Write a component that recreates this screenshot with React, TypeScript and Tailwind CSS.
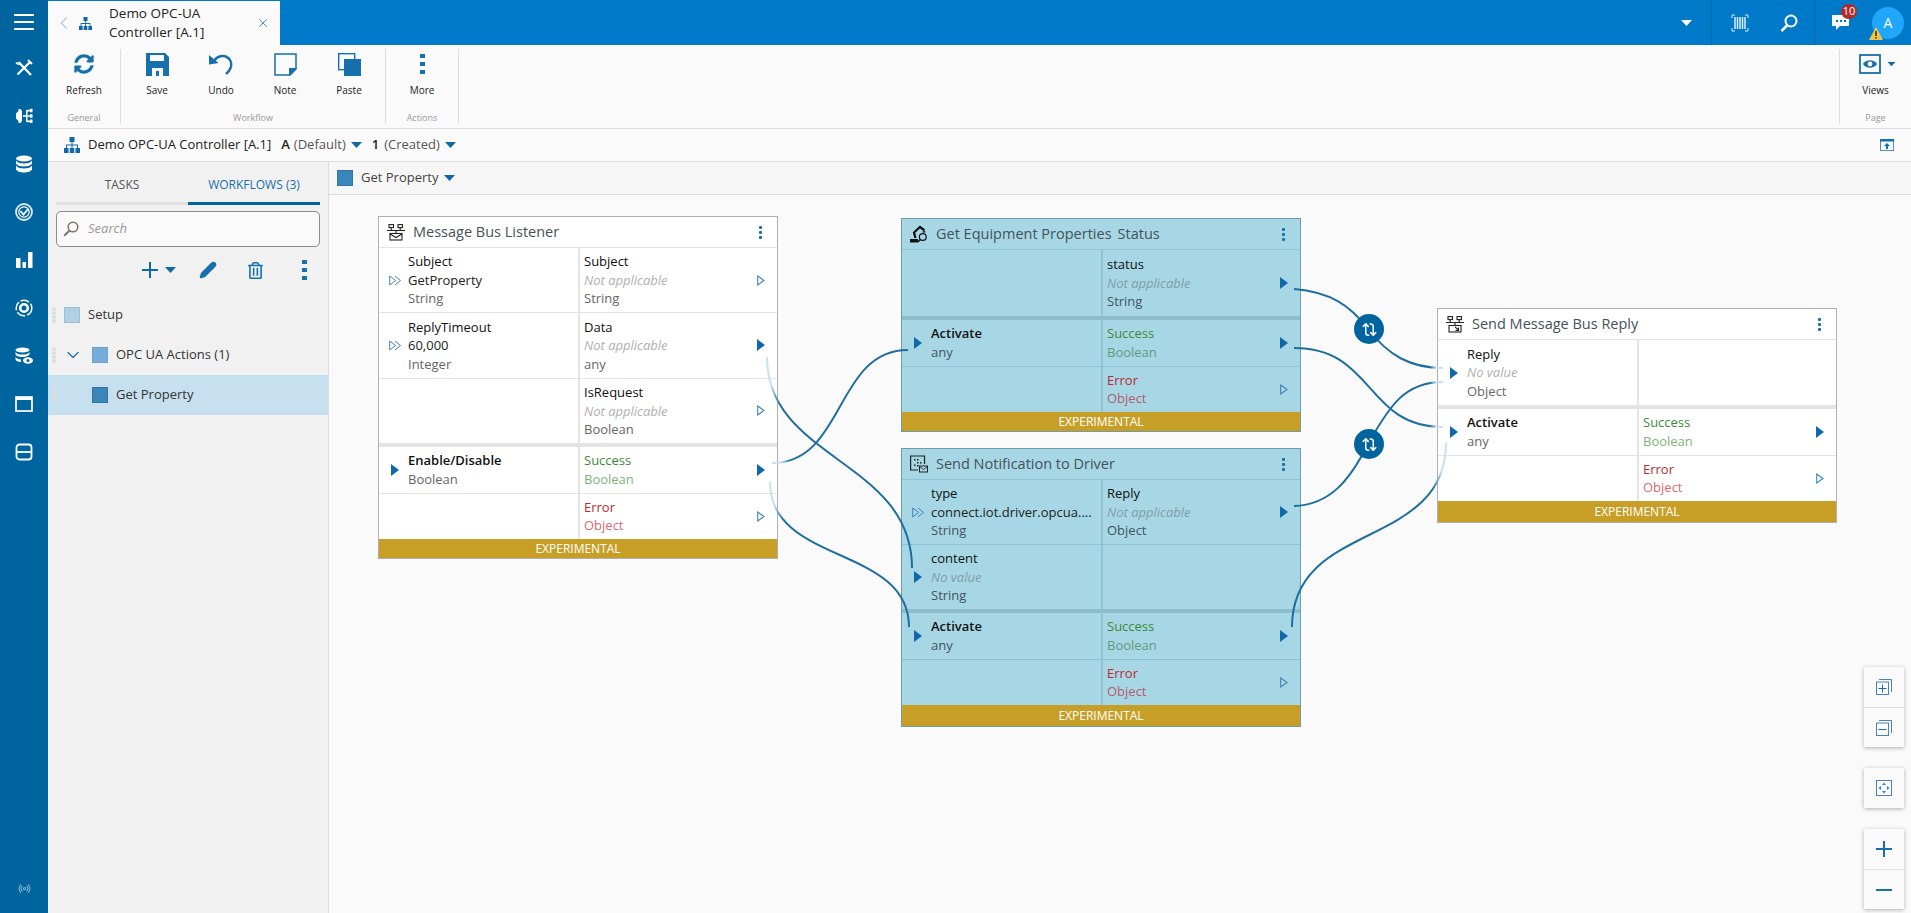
import type { ReactNode } from "react";
import { Radio, Repeat, X, ChevronLeft, ChevronDown, Pencil } from "lucide-react";
import { FaSyncAlt, FaRegTrashAlt } from "react-icons/fa";

type Port = "solid" | "hollow" | "double";
type Kind = "plain" | "success" | "error";

interface Cell {
  label?: string;
  value?: string;
  empty?: boolean; // italic placeholder value
  type?: string;
  port?: Port;
  kind?: Kind;
  strong?: boolean;
}

const BLUE = "#0f69a8";

function Caret({ className = "", color = BLUE }: { className?: string; color?: string }) {
  return (
    <svg width="11" height="6" viewBox="0 0 11 6" className={className}>
      <path d="M0 0h11L5.5 6z" fill={color} />
    </svg>
  );
}

function Hierarchy({ size = 16 }: { size?: number }) {
  return (
    <svg width={size} height={size} viewBox="0 0 16 16" fill={BLUE}>
      <rect x="5.5" y="0" width="5" height="5" />
      <rect x="0" y="11" width="4.5" height="5" />
      <rect x="5.75" y="11" width="4.5" height="5" />
      <rect x="11.5" y="11" width="4.5" height="5" />
      <path d="M7.5 5h1v2.5H14V11h-1V8.5H8.5V11h-1V8.5H3V11H2V7.500h5.500z" />
    </svg>
  );
}

function Kebab({ small = false }: { small?: boolean }) {
  const cell = small ? "h-[3px] w-[3px] rounded-[1px]" : "h-[4px] w-[5px]";
  return (
    <div className={small ? "flex flex-col gap-[2px]" : "flex flex-col gap-[4px]"}>
      <div className={`${cell} bg-[#1670ac]`} />
      <div className={`${cell} bg-[#1670ac]`} />
      <div className={`${cell} bg-[#1670ac]`} />
    </div>
  );
}

function PortMark({ port }: { port: Port }) {
  if (port === "solid") {
    return (
      <svg width="8" height="12" viewBox="0 0 8 12">
        <path d="M0 0l8 6-8 6z" fill={BLUE} />
      </svg>
    );
  }
  if (port === "hollow") {
    return (
      <svg width="8" height="11" viewBox="0 0 8 11">
        <path d="M.7 1l6.300 4.500L.7 10z" fill="none" stroke="#3f86ba" strokeWidth="1.100" />
      </svg>
    );
  }
  return (
    <svg width="12" height="11" viewBox="0 0 12 11" fill="none" stroke="#3f86ba" strokeWidth="1">
      <path d="M.7 1l6 4.500-6 4.500z" />
      <path d="M6 1l5.500 4.500L6 10" />
    </svg>
  );
}

function Row({ cell, side, teal }: { cell: Cell; side: "in" | "out"; teal: boolean }) {
  const line = teal ? "border-[#8ec3d3]" : "border-[#e4e4e4]";
  const labelColor =
    cell.kind === "success"
      ? "text-[#3b8a36]"
      : cell.kind === "error"
        ? "text-[#bb2b30]"
        : "text-[#111111]";
  const typeColor =
    cell.kind === "success"
      ? teal
        ? "text-[#5c9c7e]"
        : "text-[#7fb37a]"
      : cell.kind === "error"
        ? teal
          ? "text-[#b25c70]"
          : "text-[#dc6a70]"
        : teal
          ? "text-[#43545e]"
          : "text-[#666666]";
  return (
    <div
      className={`relative flex min-h-0 flex-1 items-center border-b last:border-b-0 ${line} ${
        side === "in" ? "pr-1 pl-[29px]" : "pr-[11px] pl-[4px]"
      }`}
    >
      {cell.port && side === "in" && (
        <div className="absolute top-0 bottom-0 left-[9px] flex w-[14px] items-center justify-center">
          <PortMark port={cell.port} />
        </div>
      )}
      <div className="min-w-0 flex-1 text-[13px] leading-[18.5px]">
        {cell.label && (
          <div className={`${labelColor} ${cell.strong ? "font-semibold" : ""}`}>{cell.label}</div>
        )}
        {cell.value && (
          <div
            className={
              cell.empty
                ? `italic ${teal ? "text-[#7e9dab]" : "text-[#b0b0b0]"}`
                : "whitespace-nowrap text-[#222222]"
            }
          >
            {cell.value}
          </div>
        )}
        {cell.type && <div className={typeColor}>{cell.type}</div>}
      </div>
      {cell.port && side === "out" && (
        <div className="flex w-[10px] items-center justify-center">
          <PortMark port={cell.port} />
        </div>
      )}
    </div>
  );
}

function Pair({
  left,
  right,
  teal,
  className,
}: {
  left: Cell[];
  right: Cell[];
  teal: boolean;
  className: string;
}) {
  const rule = teal ? "bg-[#8ec3d3]" : "bg-[#e4e4e4]";
  return (
    <div className={`flex ${className}`}>
      <div className="flex w-1/2 flex-col">
        {left.map((c, i) => (
          <Row key={i} cell={c} side="in" teal={teal} />
        ))}
      </div>
      <div className={`w-[2px] shrink-0 ${rule}`} />
      <div className="flex flex-1 flex-col">
        {right.map((c, i) => (
          <Row key={i} cell={c} side="out" teal={teal} />
        ))}
      </div>
    </div>
  );
}

function WorkflowNode({
  title,
  subtitle,
  icon,
  teal = false,
  className,
  topClass,
  inputs,
  outputs,
  actionsIn,
  actionsOut,
}: {
  title: string;
  subtitle?: string;
  icon: ReactNode;
  teal?: boolean;
  className: string;
  topClass: string;
  inputs: Cell[];
  outputs: Cell[];
  actionsIn: Cell[];
  actionsOut: Cell[];
}) {
  return (
    <div
      className={`absolute flex flex-col border ${className} ${
        teal ? "border-[#6f9cab] bg-[#a7d7e5]" : "border-[#b0b0b0] bg-white"
      }`}
    >
      <div
        className={`flex h-[31px] shrink-0 items-center border-b pr-[15px] pl-[8px] ${
          teal ? "border-[#8ec3d3]" : "border-[#e4e4e4]"
        }`}
      >
        <div className="flex w-[18px] justify-center">{icon}</div>
        <div className="ml-[8px] flex-1 text-[14.5px] text-[#44525a]">
          {title}
          {subtitle && <span className="ml-[6px]">{subtitle}</span>}
        </div>
        <Kebab small />
      </div>
      <Pair left={inputs} right={outputs} teal={teal} className={topClass} />
      <div className={`h-[4px] shrink-0 ${teal ? "bg-[#8dbccb]" : "bg-[#e4e4e4]"}`} />
      <Pair left={actionsIn} right={actionsOut} teal={teal} className="h-[92px] shrink-0" />
      <div className="flex flex-1 items-center justify-center bg-[#c79f27] text-[12px] text-white">
        EXPERIMENTAL
      </div>
    </div>
  );
}

function BusIcon({ reply = false }: { reply?: boolean }) {
  return (
    <svg width="18" height="17" viewBox="0 0 18 17" fill="none" stroke="#222" strokeWidth="1.100">
      <rect x="2" y=".6" width="4.500" height="3" />
      <rect x="11" y=".6" width="4.500" height="3" />
      <path d="M4.200 3.600v2.400M13.200 3.600v2.400M0 6.500h18M9 6.500v2.500" />
      <rect x="3" y="9.500" width="12" height="6.500" />
      {reply ? <path d="M9 11l3.500 3M12.500 11.500v3h-3" /> : <path d="M3 10l6 3.500 6-3.500" />}
    </svg>
  );
}

function RobotIcon() {
  return (
    <svg width="18" height="18" viewBox="0 0 18 18">
      <path d="M5.500 13L4 7.500 10 2l4 3" fill="none" stroke="#111" strokeWidth="2.200" />
      <path d="M14 4v3M12.500 7h3" stroke="#111" strokeWidth="1.200" />
      <path d="M0 14h8v3.500H0z" fill="#111" />
      <circle cx="12.800" cy="12" r="3.400" fill="none" stroke="#111" strokeWidth="1.200" />
      <path d="M10.300 14.500L8 17" stroke="#111" strokeWidth="1.500" />
    </svg>
  );
}

function DriverIcon() {
  return (
    <svg width="18" height="18" viewBox="0 0 18 18">
      <path d="M14.500 9V1H.6v14H8" fill="none" stroke="#222" strokeWidth="1.200" />
      <path d="M4 4h1.500v1.500H4zM7 4h1.500v1.500H7zM7 7h1.500v1.500H7zM10 7h1.500v1.500H10zM4 9.500h1.500V11H4zM7 10h1.500v1.500H7z" fill="#222" />
      <rect x="9.500" y="11" width="8" height="6" fill="#a7d7e5" stroke="#222" strokeWidth="1" />
      <path d="M9.500 11.500l4 3 4-3" fill="none" stroke="#222" strokeWidth=".9" />
    </svg>
  );
}

function RailGlyph({ name }: { name: string }) {
  const common = { width: 18, height: 18, viewBox: "0 0 18 18" };
  switch (name) {
    case "tools":
      return (
        <svg {...common} fill="none" stroke="#fff" strokeWidth="2.200">
          <path d="M3.500 3L16 16" />
          <path d="M15 3L2.500 15.500" />
          <path d="M1 3.500a3.500 3.500 0 0 0 5 1" strokeWidth="1.500" />
          <path d="M13 1l4 4" strokeWidth="2" />
        </svg>
      );
    case "flow":
      return (
        <svg {...common} fill="#fff">
          <path d="M1 6.500l2.500-2.500v-2h2l1.500 2v10l-1.500 2h-2v-2L1 11.500z" />
          <path d="M8 8.200h4v1.600H8z" />
          <path d="M11 3h1.500v12H11z" />
          <path d="M12 2.800h3v1.600h-3zM12 8.200h3v1.600h-3zM12 13.600h3v1.600h-3z" />
          <path d="M15 1.800h2.500v3.500H15zM15 7.200h2.500v3.500H15zM15 12.600h2.500v3.500H15z" />
        </svg>
      );
    case "db":
      return (
        <svg {...common} fill="#fff">
          <ellipse cx="9" cy="3.500" rx="8" ry="3" />
          <path d="M1 5.500c1 2 4 3 8 3s7-1 8-3v3c-1 2-4 3-8 3s-7-1-8-3z" />
          <path d="M1 10.500c1 2 4 3 8 3s7-1 8-3v4c-1 2-4 3-8 3s-7-1-8-3z" />
        </svg>
      );
    case "check":
      return (
        <svg {...common} fill="none" stroke="#fff">
          <circle cx="9" cy="9" r="8" strokeWidth="1.800" opacity=".85" />
          <circle cx="9" cy="9" r="5.200" strokeWidth="1.200" />
          <path d="M5.500 8l3 3.500L13 6" strokeWidth="1.800" />
        </svg>
      );
    case "bars":
      return (
        <svg {...common} fill="#fff">
          <path d="M1 7h4.500v10H1zM7.500 11H11v6H7.500zM13 1h4.500v16H13z" />
        </svg>
      );
    case "target":
      return (
        <svg {...common} fill="none" stroke="#fff">
          <circle cx="9" cy="9" r="7.800" strokeWidth="1.500" strokeDasharray="9 2" />
          <circle cx="9" cy="9" r="3.800" strokeWidth="2.600" />
        </svg>
      );
    case "dbview":
      return (
        <svg {...common} fill="#fff">
          <ellipse cx="7.500" cy="3" rx="7" ry="2.600" />
          <path d="M.5 5c1 1.800 3.500 2.600 7 2.600s6-.8 7-2.600v2.500c-2 2-5 2.600-7 2.600s-6-.6-7-2.600z" />
          <path d="M.5 10c1 1.600 3 2.400 5.500 2.500v2.500c-3 0-5-1-5.500-2.400z" />
          <ellipse cx="13" cy="13.500" rx="5" ry="3.200" />
          <circle cx="13" cy="13.500" r="1.500" fill="#00649f" />
        </svg>
      );
    case "window":
      return (
        <svg {...common}>
          <rect x="1" y="2" width="16" height="14" fill="none" stroke="#fff" strokeWidth="1.700" />
          <rect x="1" y="2" width="16" height="3" fill="#fff" />
        </svg>
      );
    default:
      return (
        <svg {...common} fill="none" stroke="#fff" strokeWidth="1.800">
          <rect x="1.500" y="1.500" width="15" height="15" rx="3" />
          <path d="M1.500 9h15" />
        </svg>
      );
  }
}

function Rail() {
  const names = ["tools", "flow", "db", "check", "bars", "target", "dbview", "window", "split"];
  return (
    <div className="flex w-[48px] shrink-0 flex-col items-center bg-[#00649f]">
      <div className="flex h-[44px] w-full flex-col items-center justify-center gap-[5px]">
        <div className="h-[2px] w-[20px] bg-white" />
        <div className="h-[2px] w-[20px] bg-white" />
        <div className="h-[2px] w-[20px] bg-white" />
      </div>
      {names.map((n) => (
        <div key={n} className="flex h-[48px] w-full items-center justify-center">
          <RailGlyph name={n} />
        </div>
      ))}
      <div className="mt-auto flex h-[50px] items-center justify-center opacity-50">
        <Radio size={13} color="#fff" />
      </div>
    </div>
  );
}

function TopBar() {
  return (
    <div className="flex h-[45px] shrink-0 bg-[#0079c8]">
      <div className="mt-[1px] flex w-[232px] items-center bg-[#fafafa]">
        <ChevronLeft size={22} strokeWidth={1.200} color="#a9cde4" className="ml-[5px]" />
        <div className="ml-[4px]">
          <Hierarchy size={13} />
        </div>
        <div className="ml-[17px] flex-1 text-[13.5px] leading-[19px] text-[#222222]">
          Demo OPC-UA
          <br />
          Controller [A.1]
        </div>
        <X size={14} strokeWidth={1.300} color="#1670ac" className="mr-[10px]" />
      </div>
      <div className="flex flex-1 items-center justify-end">
        <div className="flex h-full w-[56px] items-center justify-center border-r border-[#0067ab] pl-[6px]">
          <Caret color="#fff" />
        </div>
        <div className="flex h-full w-[103px] items-center justify-around border-r border-[#0067ab] pr-[1px] pl-[3px]">
          <svg width="18" height="18" viewBox="0 0 18 18" fill="none" stroke="#d9f0fb" strokeWidth="1">
            <path d="M4 1H1v3M14 1h3v3M4 17H1v-3M14 17h3v-3" />
            <path d="M4 3v12M6.500 3v12M9 3v12M11.500 3v12M14 3v12" strokeWidth="1.500" />
          </svg>
          <svg width="18" height="18" viewBox="0 0 18 18" fill="none" stroke="#fff" strokeWidth="2">
            <circle cx="11" cy="7" r="5.500" />
            <path d="M7 11.500L1.500 17" strokeWidth="2.500" />
          </svg>
        </div>
        <div className="flex h-full w-[96px] items-center pl-[17px]">
          <div className="relative">
            <svg width="17" height="16" viewBox="0 0 17 16" className="block">
              <path d="M0 0h17v11H8l-4 4v-4H0z" fill="#fff" />
              <path d="M4 5h2v2H4zM8 5h2v2H8zM12 5h2v2h-2z" fill="#0079c8" />
            </svg>
            <div className="absolute top-[-11px] left-[9px] flex h-[15px] min-w-[16px] items-center justify-center rounded-full bg-[#b02a2a] px-[1px] text-[11px] text-white">
              10
            </div>
          </div>
          <div className="relative ml-[23px] flex h-[32px] w-[32px] items-center justify-center rounded-full bg-[#1ea7fd] text-[14px] text-white">
            A
            <svg width="14" height="13" viewBox="0 0 14 13" className="absolute top-[20px] left-[-3px]">
              <path d="M7 0l7 13H0z" fill="#f4c640" />
              <path d="M6.300 4h1.400v5H6.300zM6.300 10h1.400v1.500H6.300z" fill="#222" />
            </svg>
          </div>
        </div>
      </div>
    </div>
  );
}

function RibbonButton({ label, icon, className }: { label: string; icon: ReactNode; className: string }) {
  return (
    <div className={`flex flex-col items-center ${className}`}>
      <div className="flex h-[24px] items-center justify-center">{icon}</div>
      <div className="mt-[7px] text-[10px] leading-[15px] text-[#222222]">{label}</div>
    </div>
  );
}

function RibbonGroup({ label, children, className }: { label: string; children: ReactNode; className: string }) {
  return (
    <div className={`flex h-[75px] flex-col items-center border-r border-[#dddddd] ${className}`}>
      <div className="flex flex-1 pt-[3px]">{children}</div>
      <div className="text-[9px] leading-[12px] text-[#999999]">{label}</div>
    </div>
  );
}

function Ribbon() {
  return (
    <div className="flex h-[84px] shrink-0 items-start justify-between border-b border-[#dddddd] bg-[#fafafa] pt-[4px]">
      <div className="flex">
        <RibbonGroup label="General" className="w-[73px]">
          <RibbonButton
            label="Refresh"
            className="w-[72px]"
            icon={<FaSyncAlt size={20} color="#1670ac" />}
          />
        </RibbonGroup>
        <RibbonGroup label="Workflow" className="w-[265px]">
          <RibbonButton
            label="Save"
            className="w-[64px]"
            icon={
              <svg width="23" height="23" viewBox="0 0 23 23">
                <path d="M0 0h19l4 4v19H0z" fill="#1670ac" />
                <path d="M4 2h14v6H4z" fill="#fafafa" />
                <path d="M6 15h11v8H6z" fill="#fafafa" />
                <path d="M10 18h3v5h-3z" fill="#1670ac" />
              </svg>
            }
          />
          <RibbonButton
            label="Undo"
            className="w-[64px]"
            icon={
              <svg width="24" height="22" viewBox="0 0 24 22">
                <path d="M5 8C9 2 17 1 21 7C24 12 21 18 17 21" fill="none" stroke="#1670ac" strokeWidth="2.400" />
                <path d="M0 2L9.500 10 0 11.500z" fill="#1670ac" />
              </svg>
            }
          />
          <RibbonButton
            label="Note"
            className="w-[64px]"
            icon={
              <svg width="23" height="23" viewBox="0 0 23 23">
                <path d="M1 1h21v15l-6 6H1z" fill="none" stroke="#1670ac" strokeWidth="1.500" />
                <path d="M15 15h8l-8 8z" fill="#1670ac" />
              </svg>
            }
          />
          <RibbonButton
            label="Paste"
            className="w-[64px]"
            icon={
              <svg width="23" height="23" viewBox="0 0 23 23">
                <rect x=".7" y=".7" width="16" height="16" fill="none" stroke="#1670ac" strokeWidth="1.400" />
                <rect x="6" y="6" width="17" height="17" fill="#1670ac" />
              </svg>
            }
          />
        </RibbonGroup>
        <RibbonGroup label="Actions" className="w-[73px]">
          <RibbonButton label="More" className="w-[72px]" icon={<Kebab />} />
        </RibbonGroup>
      </div>
      <div className="flex">
        <RibbonGroup label="Page" className="w-[72px] border-r-0 border-l">
          <RibbonButton
            label="Views"
            className="w-[72px]"
            icon={
              <div className="flex items-center">
                <svg width="22" height="20" viewBox="0 0 22 20" className="ml-[5px]">
                  <rect x="1" y="1" width="20" height="18" fill="none" stroke="#1670ac" strokeWidth="1.800" />
                  <path d="M4 10c3-5 11-5 14 0-3 5-11 5-14 0z" fill="#1670ac" />
                  <circle cx="11" cy="10" r="2.400" fill="#fafafa" />
                </svg>
                <Caret className="ml-[5px] scale-75" />
              </div>
            }
          />
        </RibbonGroup>
      </div>
    </div>
  );
}

function Breadcrumb() {
  return (
    <div className="flex h-[33px] shrink-0 items-center border-b border-[#dddddd] bg-[#fafafa] pr-[17px] pb-[1px] pl-[16px] text-[13px]">
      <Hierarchy />
      <span className="ml-[8px] text-[#222222]">Demo OPC-UA Controller [A.1]</span>
      <span className="ml-[10px] font-semibold text-[#222222]">A</span>
      <span className="ml-[4px] text-[#555555]">(Default)</span>
      <Caret className="ml-[5px]" />
      <span className="ml-[10px] font-semibold text-[#222222]">1</span>
      <span className="ml-[5px] text-[#555555]">(Created)</span>
      <Caret className="ml-[5px]" />
      <svg width="14" height="12" viewBox="0 0 14 12" className="ml-auto">
        <rect x=".5" y=".5" width="13" height="11" fill="#f4fafd" stroke="#4b92c2" />
        <rect x="0" y="0" width="14" height="2.500" fill="#1670ac" />
        <path d="M7 4l-3 3h2v3h2V7h2z" fill="#1670ac" />
      </svg>
    </div>
  );
}

function Grip() {
  return (
    <div className="absolute top-1/2 left-[4px] flex w-[4px] -translate-y-1/2 flex-col gap-[1px]">
      {[0, 1, 2, 3].map((i) => (
        <div key={i} className="h-[3px] bg-[#dddddd]" />
      ))}
    </div>
  );
}

function Sidebar() {
  return (
    <div className="flex w-[281px] shrink-0 flex-col border-r border-[#dddddd] bg-[#f1f1f1]">
      <div className="flex h-[43px] px-[8px] text-[12px]">
        <div className="flex w-1/2 items-center justify-center border-b-[3px] border-[#e0e0e0] pt-[5px] text-[#555555]">
          TASKS
        </div>
        <div className="flex w-1/2 items-center justify-center border-b-[3px] border-[#00649f] pt-[5px] text-[#1670ac]">
          WORKFLOWS (3)
        </div>
      </div>
      <div className="mx-[8px] mt-[6px] flex h-[36px] items-center rounded-[5px] border border-[#8c8c8c] bg-[#fafafa] pl-[6px]">
        <svg width="16" height="16" viewBox="0 0 16 16" fill="none" stroke="#7d7468" strokeWidth="1.500">
          <circle cx="10" cy="6" r="4.800" />
          <path d="M6.500 9.500L1.200 14.800" strokeWidth="2" />
        </svg>
        <span className="ml-[9px] text-[13px] text-[#999999] italic">Search</span>
      </div>
      <div className="flex h-[48px] shrink-0 items-center pb-[2px] pl-[94px]">
        <svg width="16" height="16" viewBox="0 0 16 16">
          <path d="M7 0h2v7h7v2H9v7H7V9H0V7h7z" fill={BLUE} />
        </svg>
        <Caret className="ml-[7px]" />
        <Pencil size={18} color="#1670ac" fill="#1670ac" className="ml-[23px]" />
        <FaRegTrashAlt size={17} color="#1670ac" className="ml-[30px]" />
        <div className="ml-[38px]">
          <Kebab />
        </div>
      </div>
      <div className="flex flex-col">
        <div className="relative flex h-[40px] items-center pl-[16px]">
          <Grip />
          <div className="h-[16px] w-[16px] border border-[#9bbfd6] bg-[#b1d0e3]" />
          <span className="ml-[8px] text-[13px] text-[#333333]">Setup</span>
        </div>
        <div className="relative flex h-[40px] items-center pl-[16px]">
          <Grip />
          <ChevronDown size={20} strokeWidth={1.400} color="#1670ac" className="mr-[6px] ml-[-1px]" />
          <div className="ml-[3px] h-[16px] w-[16px] border border-[#6ea5cf] bg-[#74addb]" />
          <span className="ml-[8px] text-[13px] text-[#333333]">OPC UA Actions (1)</span>
        </div>
        <div className="relative flex h-[40px] items-center bg-[#c7e0ef] pl-[44px]">
          <Grip />
          <div className="h-[16px] w-[16px] border border-[#2f75a6] bg-[#3a86ba]" />
          <span className="ml-[8px] text-[13px] text-[#333333]">Get Property</span>
        </div>
      </div>
    </div>
  );
}

function Connections() {
  return (
    <svg
      className="pointer-events-none absolute top-0 left-0 h-[718px] w-[1582px]"
      viewBox="329 195 1582 718"
      fill="none"
      strokeWidth="2"
    >
      <defs>
        <linearGradient id="fadeA" gradientUnits="userSpaceOnUse" x1="0" y1="357" x2="0" y2="405">
          <stop offset="0" stopColor="#c9e0ee" />
          <stop offset="0.6" stopColor="#c9e0ee" />
          <stop offset="1" stopColor="#1e6f9f" />
        </linearGradient>
        <linearGradient id="fadeB" gradientUnits="userSpaceOnUse" x1="0" y1="482" x2="0" y2="520">
          <stop offset="0" stopColor="#c9e0ee" />
          <stop offset="0.6" stopColor="#c9e0ee" />
          <stop offset="1" stopColor="#1e6f9f" />
        </linearGradient>
        <linearGradient id="fadeC" gradientUnits="userSpaceOnUse" x1="772" y1="0" x2="790" y2="0">
          <stop offset="0" stopColor="#c9e0ee" />
          <stop offset="0.5" stopColor="#c9e0ee" />
          <stop offset="1" stopColor="#1e6f9f" />
        </linearGradient>
        <linearGradient id="fadeD" gradientUnits="userSpaceOnUse" x1="1430" y1="0" x2="1443" y2="0">
          <stop offset="0" stopColor="#1e6f9f" />
          <stop offset="0.5" stopColor="#c9e0ee" />
          <stop offset="1" stopColor="#c9e0ee" />
        </linearGradient>
        <linearGradient id="fadeE" gradientUnits="userSpaceOnUse" x1="0" y1="490" x2="0" y2="443">
          <stop offset="0" stopColor="#1e6f9f" />
          <stop offset="0.4" stopColor="#c9e0ee" />
          <stop offset="1" stopColor="#c9e0ee" />
        </linearGradient>
      </defs>
      <path d="M767 357C767 460 912 460 912 568" stroke="url(#fadeA)" />
      <path d="M772 463C845 463 835 350 908 350" stroke="url(#fadeC)" />
      <path d="M770 482C770 565 909 545 909 627" stroke="url(#fadeB)" />
      <path d="M1294 289C1330 292 1350 305 1368 329C1388 355 1410 368 1443 368" stroke="url(#fadeD)" />
      <path d="M1294 348C1375 348 1365 427 1443 427" stroke="url(#fadeD)" />
      <path d="M1294 506C1330 505 1350 480 1368 444C1390 405 1405 382 1443 382" stroke="url(#fadeD)" />
      <path d="M1292 627C1292 520 1446 550 1446 443" stroke="url(#fadeE)" />
    </svg>
  );
}

function Converter({ className }: { className: string }) {
  return (
    <div className={`absolute flex h-[30px] w-[30px] items-center justify-center rounded-full bg-[#00649f] ${className}`}>
      <Repeat size={15} strokeWidth={2.400} color="#fff" className="rotate-90" />
    </div>
  );
}

function ViewButton({ children, bordered = false }: { children: ReactNode; bordered?: boolean }) {
  return (
    <div
      className={`flex h-[40px] w-[40px] items-center justify-center bg-[#fafafa] ${
        bordered ? "border-t border-[#e3e3e3]" : ""
      }`}
    >
      {children}
    </div>
  );
}

function ViewControls() {
  const stackBox = "rounded-[1px] bg-[#fafafa] shadow-[0_1px_4px_rgba(0,0,0,0.3)]";
  return (
    <div className="absolute right-[7px] bottom-[4px] flex flex-col gap-[21px]">
      <div className={stackBox}>
        <ViewButton>
          <svg width="16" height="16" viewBox="0 0 16 16" fill="none" stroke="#4b7fc0">
            <path d="M3 .5h12.500V13" />
            <rect x=".5" y="3" width="12" height="12.500" />
            <path d="M6.500 5.500v8M2.500 9.500h8" stroke="#1670ac" />
          </svg>
        </ViewButton>
        <ViewButton bordered>
          <svg width="16" height="16" viewBox="0 0 16 16" fill="none" stroke="#4b7fc0">
            <path d="M3 .5h12.500V13" />
            <rect x=".5" y="3" width="12" height="12.500" />
            <path d="M2.500 9.500h8" stroke="#1670ac" />
          </svg>
        </ViewButton>
      </div>
      <div className={stackBox}>
        <ViewButton>
          <svg width="16" height="16" viewBox="0 0 16 16">
            <rect x=".5" y=".5" width="15" height="15" fill="none" stroke="#4b7fc0" />
            <path d="M8 2.500l2 2.500H6zM8 13.500l2-2.500H6zM2.500 8L5 6v4zM13.500 8L11 6v4z" fill="#2f86c6" />
          </svg>
        </ViewButton>
      </div>
      <div className={stackBox}>
        <ViewButton>
          <svg width="16" height="16" viewBox="0 0 16 16">
            <path d="M7 0h2v7h7v2H9v7H7V9H0V7h7z" fill="#1670ac" />
          </svg>
        </ViewButton>
        <ViewButton bordered>
          <div className="h-[2px] w-[16px] bg-[#1670ac]" />
        </ViewButton>
      </div>
    </div>
  );
}

function Canvas() {
  return (
    <div className="flex min-w-0 flex-1 flex-col bg-[#fafafa]">
      <div className="flex h-[33px] shrink-0 items-center border-b border-[#dddddd] bg-[#f6f6f6] pb-[1px] pl-[8px]">
        <div className="h-[16px] w-[16px] border border-[#2f75a6] bg-[#3a86ba]" />
        <span className="ml-[8px] text-[13px] text-[#444444]">Get Property</span>
        <Caret className="ml-[6px]" />
      </div>
      <div className="relative flex-1 overflow-hidden">
        <WorkflowNode
          title="Message Bus Listener"
          icon={<BusIcon />}
          className="top-[21px] left-[49px] h-[343px] w-[400px]"
          topClass="h-[195px] shrink-0"
          inputs={[
            { label: "Subject", value: "GetProperty", type: "String", port: "double" },
            { label: "ReplyTimeout", value: "60,000", type: "Integer", port: "double" },
            {},
          ]}
          outputs={[
            { label: "Subject", value: "Not applicable", empty: true, type: "String", port: "hollow" },
            { label: "Data", value: "Not applicable", empty: true, type: "any", port: "solid" },
            { label: "IsRequest", value: "Not applicable", empty: true, type: "Boolean", port: "hollow" },
          ]}
          actionsIn={[{ label: "Enable/Disable", type: "Boolean", port: "solid", strong: true }, {}]}
          actionsOut={[
            { label: "Success", type: "Boolean", port: "solid", kind: "success" },
            { label: "Error", type: "Object", port: "hollow", kind: "error" },
          ]}
        />
        <WorkflowNode
          teal
          title="Get Equipment Properties"
          subtitle="Status"
          icon={<RobotIcon />}
          className="top-[23px] left-[572px] h-[214px] w-[400px]"
          topClass="h-[66px] shrink-0"
          inputs={[{}]}
          outputs={[{ label: "status", value: "Not applicable", empty: true, type: "String", port: "solid" }]}
          actionsIn={[{ label: "Activate", type: "any", port: "solid", strong: true }, {}]}
          actionsOut={[
            { label: "Success", type: "Boolean", port: "solid", kind: "success" },
            { label: "Error", type: "Object", port: "hollow", kind: "error" },
          ]}
        />
        <WorkflowNode
          teal
          title="Send Notification to Driver"
          icon={<DriverIcon />}
          className="top-[253px] left-[572px] h-[279px] w-[400px]"
          topClass="h-[129px] shrink-0"
          inputs={[
            { label: "type", value: "connect.iot.driver.opcua....", type: "String", port: "double" },
            { label: "content", value: "No value", empty: true, type: "String", port: "solid" },
          ]}
          outputs={[
            { label: "Reply", value: "Not applicable", empty: true, type: "Object", port: "solid" },
            {},
          ]}
          actionsIn={[{ label: "Activate", type: "any", port: "solid", strong: true }, {}]}
          actionsOut={[
            { label: "Success", type: "Boolean", port: "solid", kind: "success" },
            { label: "Error", type: "Object", port: "hollow", kind: "error" },
          ]}
        />
        <WorkflowNode
          title="Send Message Bus Reply"
          icon={<BusIcon reply />}
          className="top-[113px] left-[1108px] h-[215px] w-[400px]"
          topClass="h-[65px] shrink-0"
          inputs={[{ label: "Reply", value: "No value", empty: true, type: "Object", port: "solid" }]}
          outputs={[{}]}
          actionsIn={[{ label: "Activate", type: "any", port: "solid", strong: true }, {}]}
          actionsOut={[
            { label: "Success", type: "Boolean", port: "solid", kind: "success" },
            { label: "Error", type: "Object", port: "hollow", kind: "error" },
          ]}
        />
        <Connections />
        <Converter className="top-[119px] left-[1025px]" />
        <Converter className="top-[234px] left-[1025px]" />
        <ViewControls />
      </div>
    </div>
  );
}

export default function App() {
  return (
    <div className="flex h-screen w-full overflow-hidden bg-[#fafafa] font-['Open_Sans',sans-serif]">
      <Rail />
      <div className="flex min-w-0 flex-1 flex-col">
        <TopBar />
        <Ribbon />
        <Breadcrumb />
        <div className="flex min-h-0 flex-1">
          <Sidebar />
          <Canvas />
        </div>
      </div>
    </div>
  );
}
